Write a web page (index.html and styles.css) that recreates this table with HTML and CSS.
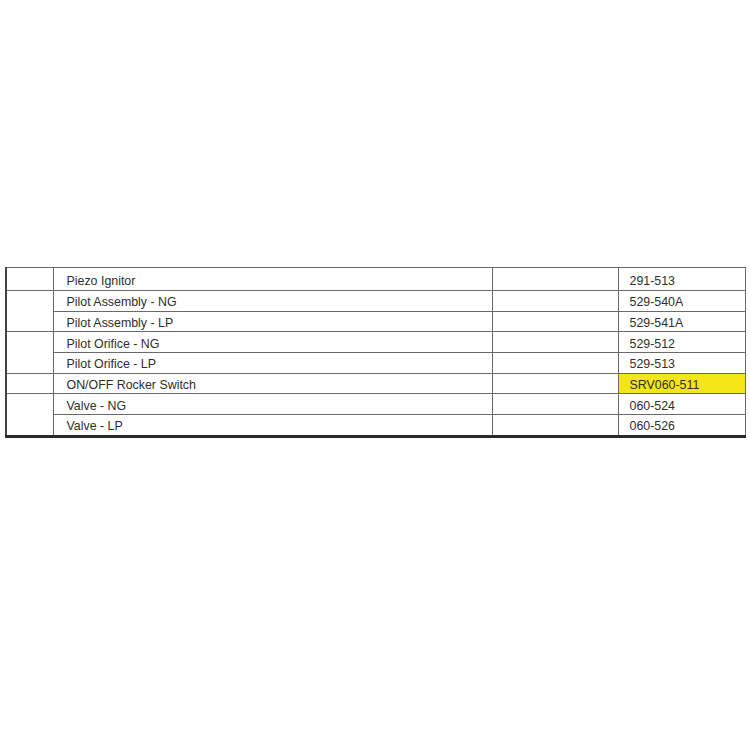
FILE: index.html
```html
<!DOCTYPE html>
<html>
<head>
<meta charset="utf-8">
<link rel="stylesheet" href="styles.css">
</head>
<body>
<table class="parts">
  <colgroup>
    <col class="c-group">
    <col class="c-desc">
    <col class="c-blank">
    <col class="c-num">
  </colgroup>
  <tbody>
    <tr class="first">
      <td class="group"></td>
      <td class="desc">Piezo Ignitor</td>
      <td></td>
      <td class="num">291-513</td>
    </tr>
    <tr>
      <td class="group" rowspan="2"></td>
      <td class="desc">Pilot Assembly - NG</td>
      <td></td>
      <td class="num">529-540A</td>
    </tr>
    <tr>
      <td class="desc">Pilot Assembly - LP</td>
      <td></td>
      <td class="num">529-541A</td>
    </tr>
    <tr>
      <td class="group" rowspan="2"></td>
      <td class="desc">Pilot Orifice - NG</td>
      <td></td>
      <td class="num">529-512</td>
    </tr>
    <tr>
      <td class="desc">Pilot Orifice - LP</td>
      <td></td>
      <td class="num">529-513</td>
    </tr>
    <tr>
      <td class="group"></td>
      <td class="desc">ON/OFF Rocker Switch</td>
      <td></td>
      <td class="num highlight">SRV060-511</td>
    </tr>
    <tr>
      <td class="group" rowspan="2"></td>
      <td class="desc">Valve - NG</td>
      <td></td>
      <td class="num">060-524</td>
    </tr>
    <tr class="last">
      <td class="desc">Valve - LP</td>
      <td></td>
      <td class="num">060-526</td>
    </tr>
  </tbody>
</table>
</body>
</html>
```

FILE: styles.css
```css
html, body {
  margin: 0;
  padding: 0;
  background: #ffffff;
}

body {
  font-family: "Liberation Sans", Arial, sans-serif;
  color: #2e2e2e;
  font-size: 12.4px;
}

.parts {
  margin-top: 267px;
  margin-left: 5px;
  width: 740px;
  border-collapse: collapse;
  table-layout: fixed;
  border-left: 2px solid #444444;
  border-bottom: 3px solid #2a2a2a;
}

.c-group { width: 47px; }
.c-desc { width: 439px; }
.c-blank { width: 126px; }
.c-num { width: 127px; }

.parts td {
  border: 1px solid #6a6a6a;
  height: 16.7px;
  padding: 3px 0 0 13px;
  line-height: 16px;
  white-space: nowrap;
  vertical-align: middle;
}

.parts tr.first td {
  height: 19px;
}

.parts td.group {
  padding: 0;
  border-left: 2px solid #444444;
}

.parts tr.first td.group {
  height: 22px;
}

.parts tr td.group {
  height: 19.7px;
}

.parts tr.last td {
  border-bottom: 3px solid #2a2a2a;
}

.parts td.num {
  padding-left: 11px;
}

.parts td.highlight {
  background: #f4e519;
}
```
